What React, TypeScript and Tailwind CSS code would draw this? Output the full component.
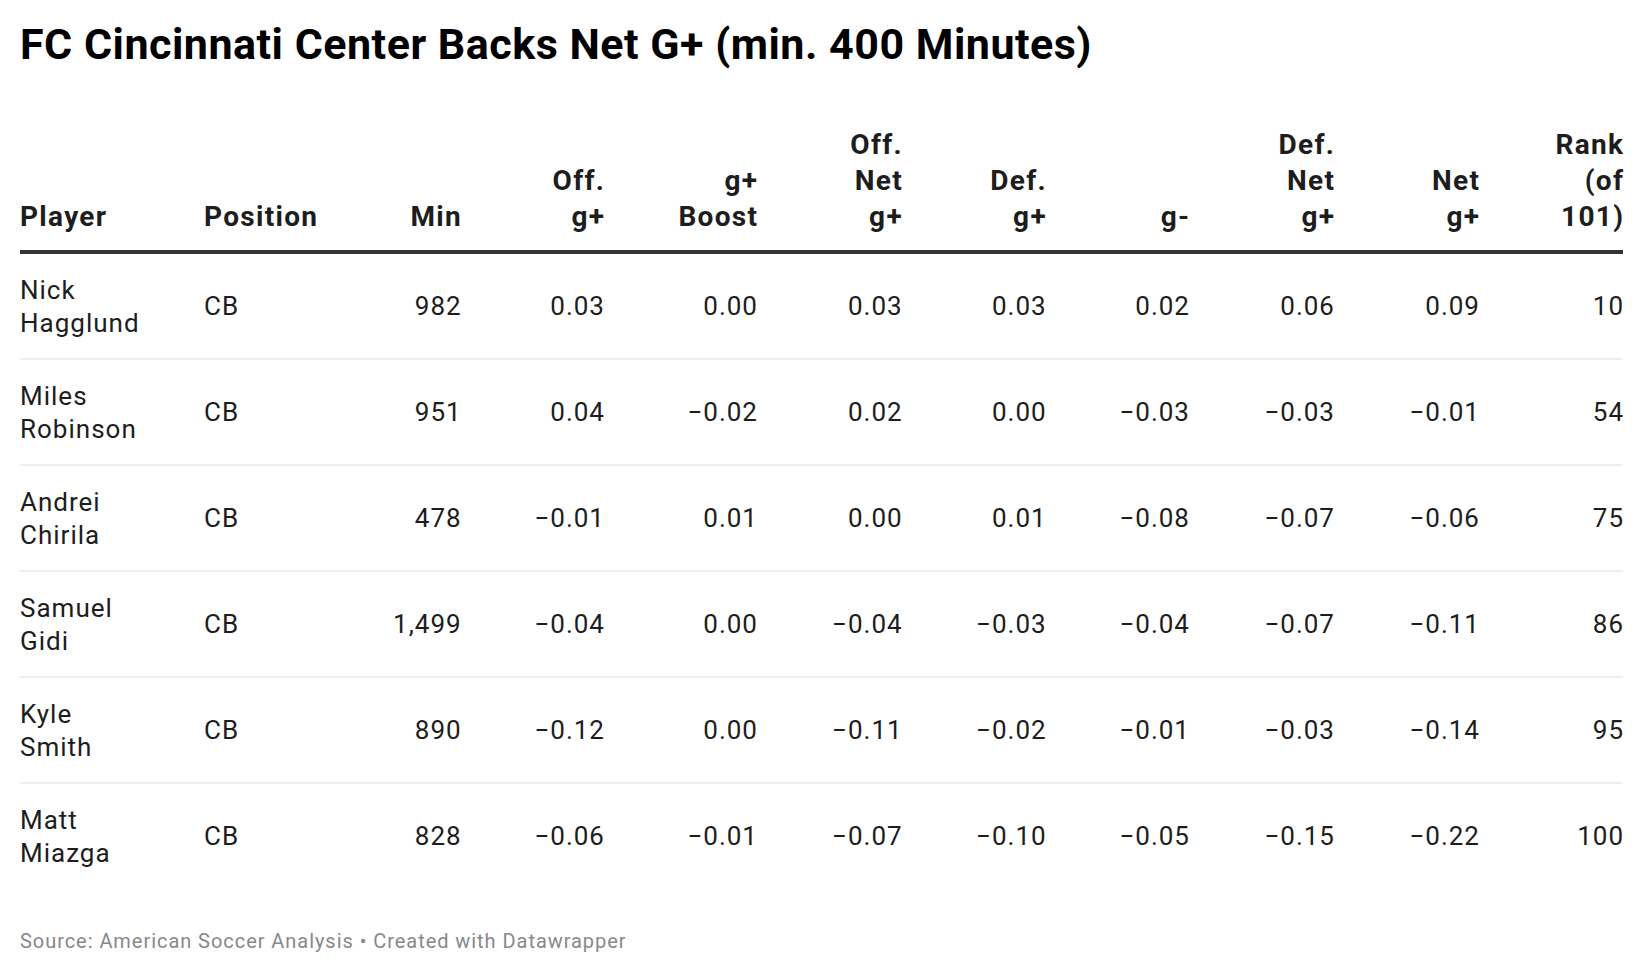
import React from 'react';

type Row = {
  first: string;
  last: string;
  pos: string;
  values: string[];
};

const headers: { lines: string[]; align: 'left' | 'right' }[] = [
  { lines: ['Player'], align: 'left' },
  { lines: ['Position'], align: 'left' },
  { lines: ['Min'], align: 'right' },
  { lines: ['Off.', 'g+'], align: 'right' },
  { lines: ['g+', 'Boost'], align: 'right' },
  { lines: ['Off.', 'Net', 'g+'], align: 'right' },
  { lines: ['Def.', 'g+'], align: 'right' },
  { lines: ['g-'], align: 'right' },
  { lines: ['Def.', 'Net', 'g+'], align: 'right' },
  { lines: ['Net', 'g+'], align: 'right' },
  { lines: ['Rank', '(of', '101)'], align: 'right' },
];

const rows: Row[] = [
  { first: 'Nick', last: 'Hagglund', pos: 'CB', values: ['982', '0.03', '0.00', '0.03', '0.03', '0.02', '0.06', '0.09', '10'] },
  { first: 'Miles', last: 'Robinson', pos: 'CB', values: ['951', '0.04', '−0.02', '0.02', '0.00', '−0.03', '−0.03', '−0.01', '54'] },
  { first: 'Andrei', last: 'Chirila', pos: 'CB', values: ['478', '−0.01', '0.01', '0.00', '0.01', '−0.08', '−0.07', '−0.06', '75'] },
  { first: 'Samuel', last: 'Gidi', pos: 'CB', values: ['1,499', '−0.04', '0.00', '−0.04', '−0.03', '−0.04', '−0.07', '−0.11', '86'] },
  { first: 'Kyle', last: 'Smith', pos: 'CB', values: ['890', '−0.12', '0.00', '−0.11', '−0.02', '−0.01', '−0.03', '−0.14', '95'] },
  { first: 'Matt', last: 'Miazga', pos: 'CB', values: ['828', '−0.06', '−0.01', '−0.07', '−0.10', '−0.05', '−0.15', '−0.22', '100'] },
];

export default function App() {
  return (
    <div className="min-h-[974px] w-full bg-white px-5 pt-[18px] font-['Roboto',sans-serif] text-[#1d1d1d]">
      {/* Title */}
      <h1 className="text-[43px] font-bold leading-[52px] tracking-[0.5px] text-black">
        FC Cincinnati Center Backs Net G+ (min. 400 Minutes)
      </h1>

      {/* Table */}
      <table className="mt-[57px] w-[1603px] table-fixed border-collapse">
        <colgroup>
          <col className="w-[184px]" />
          <col className="w-[113px]" />
          <col className="w-[143.7px]" />
          <col className="w-[143.3px]" />
          <col className="w-[153px]" />
          <col className="w-[144.7px]" />
          <col className="w-[144px]" />
          <col className="w-[143.3px]" />
          <col className="w-[145px]" />
          <col className="w-[145px]" />
          <col className="w-[144px]" />
        </colgroup>
        <thead>
          <tr className="border-b-4 border-[#333333]">
            {headers.map((h, i) => (
              <th
                key={i}
                className={
                  'pb-[15px] align-bottom text-[28px] font-bold leading-[36px] tracking-[1.3px] text-[#1d1d1d] ' +
                  (h.align === 'right' ? 'text-right' : 'text-left')
                }
              >
                {h.lines.map((l, j) => (
                  <div key={j} className={h.align === 'right' ? '-mr-[1.3px]' : ''}>
                    {l}
                  </div>
                ))}
              </th>
            ))}
          </tr>
        </thead>
        <tbody>
          {rows.map((r, i) => (
            <tr
              key={r.last}
              className={i < rows.length - 1 ? 'border-b-2 border-[#eeeeee]' : ''}
            >
              <td className="pt-[20px] pb-[19px] align-middle text-[26px] leading-[32.5px] tracking-[1px]">
                <div>{r.first}</div>
                <div>{r.last}</div>
              </td>
              <td className="align-middle text-[26px] leading-[32.5px] tracking-[1px]">{r.pos}</td>
              {r.values.map((v, j) => (
                <td
                  key={j}
                  className="align-middle text-right text-[26px] leading-[32.5px] tracking-[1px] tabular-nums"
                >
                  <div className="-mr-[1px]">{v}</div>
                </td>
              ))}
            </tr>
          ))}
        </tbody>
      </table>

      {/* Footer */}
      <p className="mt-[41px] text-[20px] leading-[24px] tracking-[0.95px] text-[#888888]">
        Source: American Soccer Analysis • Created with Datawrapper
      </p>
    </div>
  );
}
